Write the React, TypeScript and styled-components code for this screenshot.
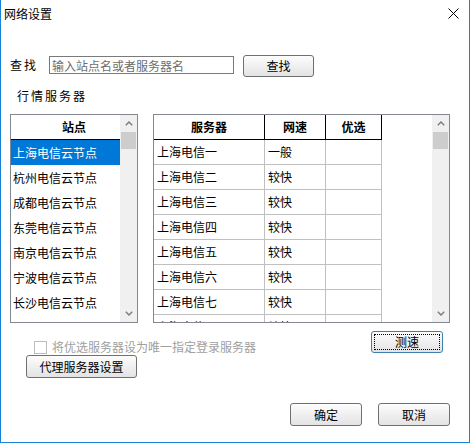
import React from 'react'
import styled, { createGlobalStyle, css } from 'styled-components'

const GlobalStyle = createGlobalStyle`
  html, body {
    margin: 0;
    padding: 0;
    background: #fff;
  }
  body {
    font-family: 'Noto Sans CJK SC', 'Microsoft YaHei', sans-serif;
    font-size: 12px;
    color: #000;
  }
`

const Window = styled.div`
  width: 470px;
  height: 443px;
  box-sizing: border-box;
  border: 1px solid #1883d7;
  border-top: none;
  background: #fff;
  display: flex;
  flex-direction: column;
  overflow: hidden;
`

const TitleBar = styled.div`
  height: 27px;
  flex-shrink: 0;
  display: flex;
  align-items: center;
  justify-content: space-between;
  padding: 0 10px 0 3px;
  line-height: 16px;
`

const CloseIcon = styled.svg`
  display: block;
`

const Content = styled.div`
  display: flex;
  flex-direction: column;
  padding: 0 19px 0 9px;
`

const SearchRow = styled.div`
  margin-top: 28px;
  height: 22px;
  display: flex;
  align-items: flex-start;
`

const SearchLabel = styled.div`
  width: 39px;
  line-height: 20px;
  letter-spacing: 2px;
`

const SearchInput = styled.input`
  width: 185px;
  height: 18px;
  margin-top: 1px;
  box-sizing: border-box;
  border: 1px solid #7a7a7a;
  padding: 0 2px;
  font-family: inherit;
  font-size: 12px;
  line-height: 16px;
  outline: none;
  &::placeholder {
    color: #6d6d6d;
  }
`

const Button = styled.button<{ $w: number; $h: number; $focused?: boolean }>`
  width: ${({ $w }) => $w}px;
  height: ${({ $h }) => $h}px;
  flex-shrink: 0;
  box-sizing: border-box;
  padding: 0;
  border: 1px solid #707070;
  border-radius: 3px;
  background: linear-gradient(#fdfdfd 0%, #f1f1f1 45%, #e3e3e3 100%);
  font-family: inherit;
  font-size: 12px;
  line-height: 16px;
  color: #000;
  ${({ $focused }) =>
    $focused &&
    css`
      border-color: #3c7fb1;
      outline: 1px dotted #000;
      outline-offset: -4px;
    `};
`

const SectionLabel = styled.div`
  margin-top: 10px;
  height: 18px;
  line-height: 18px;
  padding-left: 7px;
  letter-spacing: 2px;
`

const ListsRow = styled.div`
  margin-top: 9px;
  display: flex;
  gap: 15px;
`

const Frame = styled.div<{ $w: number }>`
  width: ${({ $w }) => $w}px;
  height: 209px;
  box-sizing: border-box;
  border: 1px solid #828790;
  display: flex;
  overflow: hidden;
  background: #fff;
`

const ListBody = styled.div`
  flex: 1;
  display: flex;
  flex-direction: column;
  overflow: hidden;
`

const ListHeader = styled.div`
  height: 24px;
  flex-shrink: 0;
  line-height: 24px;
  border-bottom: 1px solid #000;
  text-align: center;
  padding-left: 17px;
  font-weight: bold;
`

const ListRow = styled.div<{ $selected?: boolean }>`
  height: 25px;
  flex-shrink: 0;
  line-height: 25px;
  padding-left: 2px;
  white-space: nowrap;
  ${({ $selected }) =>
    $selected &&
    css`
      background: #0078d7;
      color: #fff;
    `};
`

const ScrollBar = styled.div`
  width: 17px;
  flex-shrink: 0;
  background: #f0f0f0;
  display: flex;
  flex-direction: column;
`

const ScrollArrow = styled.div`
  height: 17px;
  flex-shrink: 0;
  display: flex;
  align-items: center;
  justify-content: center;
`

const ScrollThumb = styled.div`
  height: 17px;
  margin: 0 1px;
  flex-shrink: 0;
  background: #cdcdcd;
`

const ScrollSpace = styled.div`
  flex: 1;
`

const GridRow = styled.div`
  display: grid;
  grid-template-columns: 111px 61px 56px;
  flex-shrink: 0;
`

const HeadCell = styled.div`
  height: 24px;
  line-height: 24px;
  border-right: 1px solid #000;
  border-bottom: 1px solid #000;
  text-align: center;
  font-weight: bold;
`

const Cell = styled.div`
  height: 24px;
  line-height: 24px;
  padding-left: 3px;
  border-right: 1px solid #c0c0c0;
  border-bottom: 1px solid #c0c0c0;
  white-space: nowrap;
`

const OptionsRow = styled.div`
  margin-top: 8px;
  display: flex;
  align-items: flex-start;
`

const OptionsLeft = styled.div`
  flex: 1;
  display: flex;
  flex-direction: column;
  align-items: flex-start;
`

const CheckRow = styled.label`
  margin-top: 9px;
  height: 14px;
  padding-left: 24px;
  display: flex;
  align-items: center;
  gap: 5px;
  color: #a0a0a0;
  line-height: 14px;
`

const CheckBox = styled.span`
  width: 13px;
  height: 13px;
  box-sizing: border-box;
  border: 1px solid #bcbcbc;
  background: #fff;
`

const ProxyButton = styled(Button)`
  margin-left: 16px;
  margin-top: 1px;
`

const SpeedButton = styled(Button)`
  margin-right: 7px;
`

const Footer = styled.div`
  margin-top: 25px;
  display: flex;
  justify-content: flex-end;
  gap: 16px;
`

const Chevron = ({ down }: { down?: boolean }) => (
  <svg width="8" height="5" viewBox="0 0 8 5">
    <polyline
      points={down ? '0.8,0.8 4,4 7.2,0.8' : '0.8,4.2 4,1 7.2,4.2'}
      fill="none"
      stroke="#7a7a7a"
      strokeWidth="1.4"
    />
  </svg>
)

const Scroller = () => (
  <ScrollBar>
    <ScrollArrow>
      <Chevron />
    </ScrollArrow>
    <ScrollThumb />
    <ScrollSpace />
    <ScrollArrow>
      <Chevron down />
    </ScrollArrow>
  </ScrollBar>
)

const sites = [
  '上海电信云节点',
  '杭州电信云节点',
  '成都电信云节点',
  '东莞电信云节点',
  '南京电信云节点',
  '宁波电信云节点',
  '长沙电信云节点',
  '广州电信云节点',
]

const servers = [
  { name: '上海电信一', speed: '一般' },
  { name: '上海电信二', speed: '较快' },
  { name: '上海电信三', speed: '较快' },
  { name: '上海电信四', speed: '较快' },
  { name: '上海电信五', speed: '较快' },
  { name: '上海电信六', speed: '较快' },
  { name: '上海电信七', speed: '较快' },
  { name: '上海电信八', speed: '较快' },
]

const App = () => {
  return (
    <Window>
      <GlobalStyle />
      <TitleBar>
        <span>网络设置</span>
        <CloseIcon width="11" height="11" viewBox="0 0 11 11">
          <path d="M0.5 0.5 L10.5 10.5 M10.5 0.5 L0.5 10.5" stroke="#000" strokeWidth="1" />
        </CloseIcon>
      </TitleBar>
      <Content>
        <SearchRow>
          <SearchLabel>查找</SearchLabel>
          <SearchInput placeholder="输入站点名或者服务器名" />
          <Button $w={71} $h={22} style={{ marginLeft: 9 }}>
            查找
          </Button>
        </SearchRow>
        <SectionLabel>行情服务器</SectionLabel>
        <ListsRow>
          <Frame $w={128}>
            <ListBody>
              <ListHeader>站点</ListHeader>
              {sites.map((s, i) => (
                <ListRow key={s} $selected={i === 0}>
                  {s}
                </ListRow>
              ))}
            </ListBody>
            <Scroller />
          </Frame>
          <Frame $w={297}>
            <ListBody>
              <GridRow>
                <HeadCell>服务器</HeadCell>
                <HeadCell>网速</HeadCell>
                <HeadCell>优选</HeadCell>
              </GridRow>
              {servers.map((s) => (
                <GridRow key={s.name}>
                  <Cell>{s.name}</Cell>
                  <Cell>{s.speed}</Cell>
                  <Cell />
                </GridRow>
              ))}
            </ListBody>
            <Scroller />
          </Frame>
        </ListsRow>
        <OptionsRow>
          <OptionsLeft>
            <CheckRow>
              <CheckBox />
              将优选服务器设为唯一指定登录服务器
            </CheckRow>
            <ProxyButton $w={111} $h={23}>
              代理服务器设置
            </ProxyButton>
          </OptionsLeft>
          <SpeedButton $w={72} $h={22} $focused>
            测速
          </SpeedButton>
        </OptionsRow>
        <Footer>
          <Button $w={72} $h={23}>
            确定
          </Button>
          <Button $w={72} $h={23}>
            取消
          </Button>
        </Footer>
      </Content>
    </Window>
  )
}

export default App
